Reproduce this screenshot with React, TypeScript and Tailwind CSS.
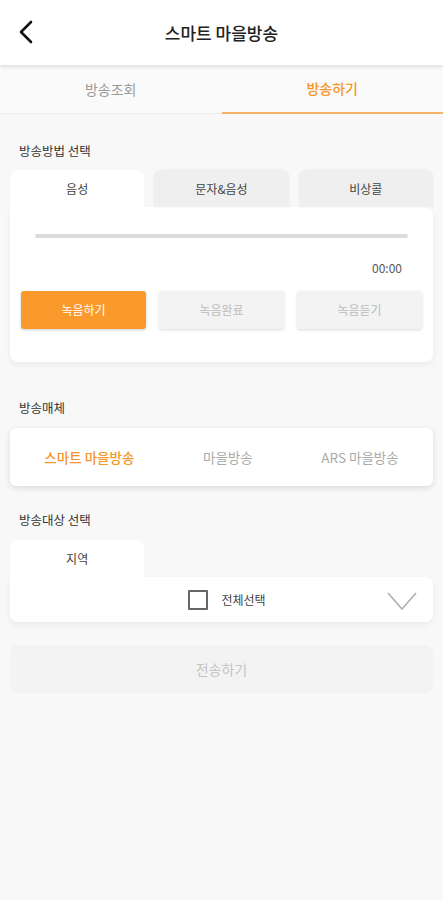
import React from "react";

const font = { fontFamily: '"Noto Sans CJK KR", "Noto Sans", sans-serif' };

export default function App() {
  return (
    <div className="min-h-[900px] w-[443px] bg-[#f8f8f8]" style={font}>
      {/* Header */}
      <div className="relative z-10 flex h-[65px] items-center justify-center bg-white shadow-[0_2px_4px_rgba(0,0,0,0.12)]">
        <button className="absolute left-[14px] top-[18px] flex h-[28px] w-[24px] items-center justify-center">
          <svg width="16" height="24" viewBox="0 0 16 24" fill="none">
            <path d="M13 2 L3 12 L13 22" stroke="#111" strokeWidth="2.6" strokeLinecap="round" strokeLinejoin="round" />
          </svg>
        </button>
        <span className="text-[17px] font-medium text-[#222]">스마트 마을방송</span>
      </div>

      {/* Top tabs */}
      <div className="flex h-[49px] bg-[#fafafa]">
        <div className="flex flex-1 items-center justify-center border-b border-[#ececec] text-[14px] text-[#999]">방송조회</div>
        <div className="flex flex-1 items-center justify-center border-b-2 border-[#f8b36a] text-[14px] font-medium text-[#f5962b]">방송하기</div>
      </div>

      <div className="px-[10px]">
        <div className="pl-[9px] pt-[27px] pb-[10px] text-[12.5px] leading-[19px] text-[#333]">방송방법 선택</div>

        <div className="grid grid-cols-3 gap-[10px]">
          <div className="flex h-[37px] items-center justify-center rounded-t-[8px] bg-white text-[12px] text-[#444]">음성</div>
          <div className="flex h-[37px] items-center justify-center rounded-t-[8px] bg-[#efefef] text-[12px] text-[#444] shadow-[0_0_3px_rgba(0,0,0,0.06)]">문자&amp;음성</div>
          <div className="flex h-[37px] items-center justify-center rounded-t-[8px] bg-[#efefef] text-[12px] text-[#444] shadow-[0_0_3px_rgba(0,0,0,0.06)]">비상콜</div>
        </div>
        <div className="rounded-b-[8px] rounded-tr-[8px] bg-white px-[11px] pt-[27px] pb-[33px] shadow-[0_3px_6px_rgba(0,0,0,0.05)]">
          <div className="mx-[14px] h-[4px] rounded-full bg-[#dcdcdc]" />
          <div className="mt-[21px] pr-[20px] text-right text-[12px] leading-[18px] text-[#555]">00:00</div>
          <div className="mt-[14px] grid grid-cols-3 gap-[13px]">
            <div className="flex h-[38px] items-center justify-center rounded-[3px] bg-[#fb9a2c] text-[12px] text-white shadow-[0_1px_3px_rgba(0,0,0,0.2)]">녹음하기</div>
            <div className="flex h-[38px] items-center justify-center rounded-[3px] bg-[#f3f3f3] text-[12px] text-[#bbb] shadow-[0_1px_3px_rgba(0,0,0,0.15)]">녹음완료</div>
            <div className="flex h-[38px] items-center justify-center rounded-[3px] bg-[#f3f3f3] text-[12px] text-[#bbb] shadow-[0_1px_3px_rgba(0,0,0,0.15)]">녹음듣기</div>
          </div>
        </div>

        <div className="pl-[9px] pt-[36px] pb-[11px] text-[12.5px] leading-[19px] text-[#333]">방송매체</div>
        <div className="flex h-[58px] items-center justify-around rounded-[6px] bg-white shadow-[0_2px_6px_rgba(0,0,0,0.12)]">
          <div className="text-[13.5px] font-medium text-[#f5962b]">스마트 마을방송</div>
          <div className="text-[13.5px] text-[#aaa]">마을방송</div>
          <div className="text-[13.5px] text-[#aaa]">ARS 마을방송</div>
        </div>

        <div className="pl-[9px] pt-[24px] pb-[11px] text-[12.5px] leading-[19px] text-[#333]">방송대상 선택</div>
        <div className="grid grid-cols-3 gap-[10px]">
          <div className="flex h-[37px] items-center justify-center rounded-t-[8px] bg-white text-[12px] text-[#444]">지역</div>
        </div>
        <div className="relative flex h-[45px] items-center justify-center rounded-b-[8px] rounded-tr-[8px] bg-white pl-[11px] shadow-[0_3px_6px_rgba(0,0,0,0.06)]">
          <div className="flex items-center gap-[13px]">
            <div className="h-[20px] w-[20px] rounded-[1px] border-2 border-[#666]" />
            <span className="text-[12px] text-[#444]">전체선택</span>
          </div>
          <svg className="absolute right-[16px] top-[14px]" width="30" height="20" viewBox="0 0 30 20" fill="none">
            <path d="M1 2 L15 18 L29 2" stroke="#b0b0b0" strokeWidth="1.6" />
          </svg>
        </div>

        <div className="mt-[23px] flex h-[48px] items-center justify-center rounded-[8px] bg-[#f3f3f3] text-[14px] text-[#c4c4c4]">전송하기</div>
      </div>
    </div>
  );
}
